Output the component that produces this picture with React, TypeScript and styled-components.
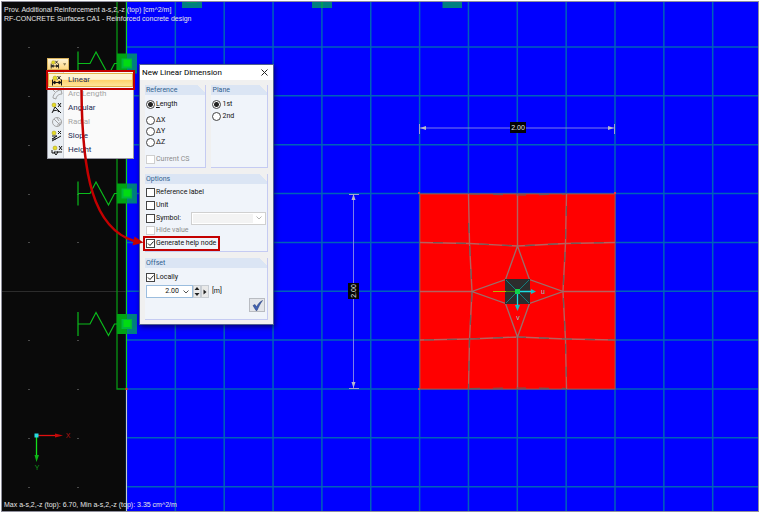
import React, { useState } from "react";
import styled, { createGlobalStyle, css } from "styled-components";

const GlobalStyle = createGlobalStyle`
  * { box-sizing: border-box; }
  body { margin: 0; background: #fff; }
`;

const Viewport = styled.main`
  position: relative;
  display: flex;
  flex-direction: column;
  justify-content: space-between;
  min-height: 100vh;
  padding: 5px 4px;
  overflow: hidden;
  background: #0a0a0a;
  color: #e6e6e6;
  font: 7px/9px "Liberation Sans", sans-serif;

  &::after {
    content: "";
    position: absolute;
    inset: 0;
    border: 1px solid #fff;
    border-bottom-width: 2px;
    box-shadow: inset 0 0 0 1px #8f8f9c;
    pointer-events: none;
  }
`;

const Scene = styled.svg`
  position: absolute;
  inset: 0;
  width: 100%;
  height: 100%;
  font-family: "Liberation Sans", sans-serif;
  pointer-events: none;
`;

const Caption = styled.p`
  position: relative;
  margin: 0;
`;

const DimensionMenu = styled.nav`
  position: absolute;
  left: 47px;
  top: 58px;
  width: 87px;
  font: 8px/14px Roboto, sans-serif;
`;

const SplitButton = styled.button`
  display: flex;
  align-items: center;
  gap: 3px;
  width: 22px;
  height: 12px;
  padding: 0 2px;
  border: 1px solid #d9b25c;
  background: linear-gradient(#fff3d4, #ffd983);
`;

const MenuList = styled.ul`
  margin: 0;
  padding: 2px 0 1px;
  list-style: none;
  border: 1px solid #9a9aa4;
  background: linear-gradient(90deg, #e9eef3 0 15px, #d0d5dc 15px 16px, #fafafa 16px);
`;

const MenuItem = styled.button<{ $active?: boolean }>`
  display: flex;
  align-items: center;
  gap: 5px;
  width: 100%;
  height: 14px;
  padding: 0 2px;
  border: 1px solid transparent;
  background: none;
  color: #1e2c55;
  font: inherit;
  text-align: left;
  &:disabled { color: #a5a5a5; }
  ${(p) => p.$active && css`
    border-color: #e2b44c;
    background: linear-gradient(#fff4d3 0 45%, #ffd369 50%, #ffe49a);
  `}
`;

const Dialog = styled.section`
  position: absolute;
  left: 139px;
  top: 64px;
  width: 135px;
  border: 1px solid #51618f;
  background: #f0f0f0;
  box-shadow: 1px 2px 5px rgba(0, 0, 30, 0.6);
  color: #111;
  font: 7px/11px Roboto, sans-serif;
`;

const TitleBar = styled.header`
  display: flex;
  align-items: center;
  justify-content: space-between;
  height: 15px;
  padding: 0 5px 0 2px;
  background: #fff;
`;

const Title = styled.h1`
  margin: 0;
  color: #000;
  font: 8px/14px Roboto, sans-serif;
`;

const CloseButton = styled.button`
  display: flex;
  padding: 0;
  border: 0;
  background: none;
`;

const DialogBody = styled.div`
  display: flex;
  flex-direction: column;
  gap: 6px;
  padding: 5px 5px 4px;
`;

const Columns = styled.div`
  display: grid;
  grid-template-columns: 62fr 57fr;
  gap: 5px;
`;

const Group = styled.fieldset`
  min-width: 0;
  margin: 0;
  padding: 0;
  border: solid #c5cbf2;
  border-width: 0 1px 1px 0;
  background: #f0f4fa;
`;

const GroupTitle = styled.legend`
  float: left;
  width: 100%;
  height: 10px;
  padding: 0 1px;
  background: linear-gradient(225deg, #f0f0f0 5px, #dbe5f4 5px);
  color: #2f5f8f;
  line-height: 10px;
`;

const GroupBody = styled.div<{ $compact?: boolean }>`
  clear: both;
  padding: ${(p) => (p.$compact ? 2 : 4)}px 1px 1px;
`;

const Choice = styled.label<{ $disabled?: boolean; $spaced?: boolean; $tall?: boolean }>`
  display: flex;
  align-items: center;
  gap: 1px;
  height: ${(p) => (p.$tall ? 13 : 11)}px;
  margin-top: ${(p) => (p.$spaced ? 5 : 0)}px;
  color: ${(p) => (p.$disabled ? "#8d8d8d" : "#111")};
  white-space: nowrap;
`;

const Radio = styled.input.attrs({ type: "radio" })`
  appearance: none;
  flex: none;
  width: 9px;
  height: 9px;
  margin: 0;
  border: 1px solid #444;
  border-radius: 50%;
  background: #fff;
  &:checked { background: radial-gradient(circle, #222 0 2px, #fff 3px); }
`;

const CheckBoxFrame = styled.span`
  position: relative;
  display: flex;
  flex: none;
`;

const CheckInput = styled.input.attrs({ type: "checkbox" })`
  appearance: none;
  width: 9px;
  height: 9px;
  margin: 0;
  border: 1px solid #444;
  background: #fff;
  &:disabled { border-color: #cfcfcf; }
`;

const CheckMark = styled.svg`
  position: absolute;
  inset: 0;
  pointer-events: none;
`;

const SymbolRow = styled.div`
  display: flex;
  align-items: center;
  justify-content: space-between;
  height: 12px;
`;

const SelectShell = styled.div<{ $wide?: boolean }>`
  display: flex;
  align-items: center;
  width: ${(p) => (p.$wide ? 75 : 47)}px;
  height: 13px;
  padding-right: 3px;
  border: 1px solid ${(p) => (p.$wide ? "#d0d0d0" : "#9bbdde")};
  background: #fff;
`;

const SymbolSelect = styled.select`
  appearance: none;
  flex: 1;
  min-width: 0;
  height: 9px;
  margin: 0 3px 0 1px;
  border: 0;
  background: #eee;
`;

const ValueInput = styled.input`
  flex: 1;
  min-width: 0;
  height: 11px;
  padding: 0 4px 0 0;
  border: 0;
  background: #fff;
  color: #111;
  font: inherit;
  text-align: right;
`;

const OffsetRow = styled.div`
  display: flex;
  align-items: center;
  margin-top: 2px;
`;

const StepButton = styled.button`
  display: flex;
  align-items: center;
  justify-content: center;
  width: 8px;
  height: 13px;
  padding: 0;
  border: 1px solid #c8cdd3;
  background: #e9e9e9;
`;

const UnitText = styled.span`
  margin-left: 3px;
`;

const Actions = styled.div`
  display: flex;
  justify-content: flex-end;
  padding: 0 1px 6px 0;
`;

const ApplyButton = styled.button`
  display: flex;
  align-items: center;
  justify-content: center;
  width: 16px;
  height: 14px;
  padding: 0;
  border: 1px solid #b9bcc2;
  background: #e4e6ea;
`;

const STEP = 48.85;
const LEFT = 126.5;
const TOP = 47;
const columns = Array.from({ length: 40 }, (_, i) => LEFT + i * STEP);
const rows = Array.from({ length: 30 }, (_, i) => TOP + i * STEP);

function Spring({ y }: { y: number }) {
  return (
    <g>
      <path
        d={`M78 ${y - 12}v24M78 ${y}h12l6-11.500 12.500 23 6-11.500h3`}
        fill="none" stroke="#0abb1b" strokeWidth="1.200"
      />
      <rect x="117" y={y - 10} width="10" height="20" fill="#00a313" />
      <rect x="127" y={y - 10} width="10" height="20" fill="#008080" />
      <rect x="121.500" y={y - 5} width="10.500" height="10" fill="#00b83a" />
      <rect x="123.500" y={y - 4} width="7" height="7" fill="#00dc12" />
    </g>
  );
}

function ModelScene() {
  return (
    <Scene aria-hidden="true">
      <rect x={LEFT} y="0" width="100%" height="100%" fill="#0000ff" />
      <g stroke="#0062b8" strokeWidth="1.500">
        {columns.map((x) => <line key={x} x1={x} x2={x} y1="0" y2="100%" />)}
        {rows.map((y) => <line key={y} x1={LEFT} x2="100%" y1={y} y2={y} />)}
      </g>
      <g fill="#4a4a4a">
        {rows.map((y) => (
          <g key={y}>
            <rect x="28" y={Math.round(y)} width="2" height="1" />
            <rect x="77" y={Math.round(y)} width="2" height="1" />
          </g>
        ))}
      </g>
      <path d="M1 291.500H126" stroke="#2c2c2c" />
      <g fill="#008080">
        <rect x="182" y="0" width="20" height="8" />
        <rect x="312" y="0" width="20" height="8" />
        <rect x="442.500" y="0" width="19.500" height="8" />
      </g>
      <path d="M187 0h10v3h-10zM321 2h2v6h-2z" fill="#009b5a" />
      <path d="M117 0V389H126.500" fill="none" stroke="#099514" strokeWidth="1.300" />
      <path d="M126.500 0V388" stroke="#12cf1c" />
      <path d="M126.500 389V514" stroke="#c9c9c9" />
      <rect x="125.500" y="388" width="2" height="2" fill="#f22" />
      {[63.5, 193.5, 324].map((y) => <Spring key={y} y={y} />)}

      <rect x="420" y="194" width="195" height="195" fill="#ff0000" stroke="#b54a3c" strokeWidth="1" />
      <g fill="none" stroke="#b5625e" strokeWidth="1.400">
        <path d="M468.500 194L469.500 243L472 291.500L469.500 340L468.500 389" />
        <path d="M566.500 194L565.500 243L563 291.500L565.500 340L566.500 389" />
        <path d="M420 242.500L469.500 243.500L517.500 246L565.500 243.500L615 242.500" />
        <path d="M420 340L469.500 339L517.500 337L565.500 339L615 340" />
        <path d="M517.500 194V246M517.500 337V389M420 291.500H472M563 291.500H615" />
      </g>
      <g fill="none" stroke="#6c5a58" strokeWidth="1.200" strokeDasharray="10 13">
        <path d="M468.500 223L469.500 243L472 291.500L469.500 340L468.500 389" />
        <path d="M566.500 206L565.500 243L563 291.500L565.500 340L566.500 389" />
        <path d="M433 242.500L469.500 243.500L517.500 246L565.500 243.500L615 242.500" />
        <path d="M424 340L469.500 339L517.500 337L565.500 339L615 340" />
        <path d="M470 194L517.500 195L566 194M470 388.500L517.500 388L566 388.500" />
      </g>
      <path
        d="M517.500 246L505.500 279.500L472 291.500L505.500 303.500L517.500 337L529.500 303.500L563 291.500L529.500 279.500Z"
        fill="none" stroke="#98706c" strokeWidth="1.300"
      />
      <rect x="505" y="279" width="25" height="25" fill="#2d2d2d" />
      <path d="M506 280L529 303M529 280L506 303" stroke="#137f7f" />
      <path d="M493 291.500H506" stroke="#b4b600" />
      <path d="M506 291.500H516" stroke="#3f8b10" />
      <path d="M518 291.500H533M517.500 292V306" stroke="#18dfe4" strokeWidth="1.300" />
      <path d="M531 289l5 2.500-5 2.500zM515 305h5l-2.500 6z" fill="#18bfc5" />
      <rect x="515" y="289" width="5" height="5" fill="#0fd34d" />
      <g fill="#80cfca" fontSize="7" textAnchor="middle">
        <text x="543" y="294">u</text>
        <text x="518" y="320">v</text>
      </g>

      <g stroke="#7e7ee8">
        <path d="M420 128H615M353.500 195V388" />
        <path d="M419.500 124v10M614.500 124v10M349 194.500h10M349 388.500h10" stroke="#a2a2d2" />
      </g>
      <path d="M420 128l6-2v4zM614 128l-6-2v4zM353.500 194l-2 6h4zM353.500 388l-2-6h4z" fill="#b9b9c8" />
      <g fontSize="7" fill="#e8e8e8" textAnchor="middle">
        <rect x="510" y="122" width="16" height="11" fill="#050505" />
        <text x="518" y="130">2.00</text>
        <rect x="348" y="283" width="11" height="16" fill="#050505" />
        <text transform="translate(356 291) rotate(-90)">2.00</text>
      </g>
      <path d="M418 192h2v2h-2zM614 192h2v2h-2zM418 388h2v2h-2z" fill="#e8304c" />

      <path d="M37 435.500H56" stroke="#e01010" strokeWidth="1.300" />
      <path d="M55 433.500L63 435.500L55 437.500Z" fill="#c40808" />
      <path d="M36.500 436V455" stroke="#14e01c" strokeWidth="1.300" />
      <path d="M34.500 455h4.500L36.500 462Z" fill="#0eb516" />
      <rect x="34.500" y="433.500" width="4" height="4" fill="#27dbe0" />
      <g fontSize="7" textAnchor="middle">
        <text x="68" y="438" fill="#b31212">X</text>
        <text x="37" y="470" fill="#0c9c16">Y</text>
      </g>
    </Scene>
  );
}

type IconKind = "linear" | "arc" | "angular" | "radial" | "slope" | "height";

const iconShapes: Record<IconKind, React.ReactNode> = {
  linear: (
    <>
      <path d="M1.500 5.500v6M10.500 5.500v6M1 8.500h10" />
      <path d="M2 8.500l2-1.500v3zM10 8.500L8 7v3z" />
      <path d="M6.500 2l3 3.500M9.500 2l-3 3.500" />
    </>
  ),
  arc: <><path d="M2 10C2 6 6 2 10 2M5 11c0-3 3-5 6-5M2 10l3 1M10 2l1 4" /><path d="M2 2l2 2" /></>,
  angular: <><path d="M1 11L4 5M4 5l6 6M2 9c3-1 4-1 6 1M7 1l3 4M10 1L7 5" /></>,
  radial: <><circle cx="6" cy="6" r="4.500" /><path d="M3 3l6 6M6 9h3V6M6 2l2 3" /></>,
  slope: <><path d="M1 6h5l-5 3h4M1 11l9-5M7 1l3 3M10 1L7 4" /></>,
  height: <><path d="M1 6v3h3M3 8l2 3 2-3zM6 8h5M8 2l3 4M11 2L8 6" /></>,
};

function DimensionIcon({ kind, disabled }: { kind: IconKind; disabled?: boolean }) {
  const node: Partial<Record<IconKind, [number, number]>> = {
    linear: [4, 4], angular: [3, 3], slope: [3, 3], height: [4, 4],
  };
  const at = node[kind];
  return (
    <svg width="12" height="12" viewBox="0 0 12 12" fill="none" stroke={disabled ? "#a2a2a2" : "#151515"} aria-hidden="true">
      {iconShapes[kind]}
      {at && <circle cx={at[0]} cy={at[1]} r="2" fill="#e7dc24" stroke="#9c931c" strokeWidth=".5" />}
    </svg>
  );
}

function Check({ checked, disabled }: { checked?: boolean; disabled?: boolean }) {
  const [on, setOn] = useState(!!checked);
  return (
    <CheckBoxFrame>
      <CheckInput checked={on} disabled={disabled} onChange={(e) => setOn(e.target.checked)} />
      {on && (
        <CheckMark width="9" height="9" viewBox="0 0 9 9" fill="none" stroke="#222">
          <path d="M2 4.500L4 6.500L7.500 2.500" />
        </CheckMark>
      )}
    </CheckBoxFrame>
  );
}

const Chevron = ({ muted }: { muted?: boolean }) => (
  <svg width="6" height="4" viewBox="0 0 6 4" fill="none" stroke={muted ? "#b5b5b5" : "#555"} aria-hidden="true">
    <path d="M.5 .5L3 3L5.500 .5" />
  </svg>
);

const menuItems: { label: string; kind: IconKind; active?: boolean; disabled?: boolean }[] = [
  { label: "Linear", kind: "linear", active: true },
  { label: "Arc Length", kind: "arc", disabled: true },
  { label: "Angular", kind: "angular" },
  { label: "Radial", kind: "radial", disabled: true },
  { label: "Slope", kind: "slope" },
  { label: "Height", kind: "height" },
];

export default function App() {
  return (
    <>
      <GlobalStyle />
      <Viewport>
        <ModelScene />
        <div>
          <Caption>Prov. Additional Reinforcement a-s,2,-z (top) [cm^2/m]</Caption>
          <Caption>RF-CONCRETE Surfaces CA1 - Reinforced concrete design</Caption>
        </div>
        <Caption>Max a-s,2,-z (top): 6.70, Min a-s,2,-z (top): 3.35 cm^2/m</Caption>

        <DimensionMenu aria-label="Dimensions">
          <SplitButton aria-label="Dimension type">
            <DimensionIcon kind="linear" />
            <svg width="4" height="3" viewBox="0 0 4 3" aria-hidden="true"><path d="M0 0h4L2 3z" fill="#8a7a50" /></svg>
          </SplitButton>
          <MenuList>
            {menuItems.map((item) => (
              <li key={item.label}>
                <MenuItem $active={item.active} disabled={item.disabled}>
                  <DimensionIcon kind={item.kind} disabled={item.disabled} />
                  {item.label}
                </MenuItem>
              </li>
            ))}
          </MenuList>
        </DimensionMenu>

        <Dialog role="dialog" aria-labelledby="dialog-title">
          <TitleBar>
            <Title id="dialog-title">New Linear Dimension</Title>
            <CloseButton aria-label="Close">
              <svg width="7" height="7" viewBox="0 0 7 7" stroke="#222"><path d="M.5 .5l6 6M6.500 .5l-6 6" /></svg>
            </CloseButton>
          </TitleBar>
          <DialogBody>
            <Columns>
              <Group>
                <GroupTitle>Reference</GroupTitle>
                <GroupBody>
                  <Choice><Radio name="reference" defaultChecked /><span><u>L</u>ength</span></Choice>
                  <Choice $spaced><Radio name="reference" />ΔX</Choice>
                  <Choice><Radio name="reference" />ΔY</Choice>
                  <Choice><Radio name="reference" />ΔZ</Choice>
                  <Choice $spaced $tall $disabled><Check disabled />Current CS</Choice>
                </GroupBody>
              </Group>
              <Group>
                <GroupTitle>Plane</GroupTitle>
                <GroupBody>
                  <Choice><Radio name="plane" defaultChecked />1st</Choice>
                  <Choice $tall><Radio name="plane" />2nd</Choice>
                </GroupBody>
              </Group>
            </Columns>
            <Group>
              <GroupTitle>Options</GroupTitle>
              <GroupBody $compact>
                <Choice $tall><Check />Reference label</Choice>
                <Choice $tall><Check />Unit</Choice>
                <SymbolRow>
                  <Choice><Check />Symbol:</Choice>
                  <SelectShell $wide>
                    <SymbolSelect disabled aria-label="Symbol" />
                    <Chevron muted />
                  </SelectShell>
                </SymbolRow>
                <Choice $tall $disabled><Check disabled />Hide value</Choice>
                <Choice $tall><Check checked />Generate help node</Choice>
              </GroupBody>
            </Group>
            <Group>
              <GroupTitle>Offset</GroupTitle>
              <GroupBody>
                <Choice><Check checked />Locally</Choice>
                <OffsetRow>
                  <SelectShell>
                    <ValueInput defaultValue="2.00" aria-label="Offset in metres" />
                    <Chevron />
                  </SelectShell>
                  <StepButton aria-label="Step value">
                    <svg width="6" height="9" viewBox="0 0 6 9" fill="#222"><path d="M3 0L5.500 3H.5zM3 9L.5 6h5z" /></svg>
                  </StepButton>
                  <StepButton aria-label="More">
                    <svg width="4" height="6" viewBox="0 0 4 6" fill="#222"><path d="M.5 .5L3.500 3L.5 5.500z" /></svg>
                  </StepButton>
                  <UnitText>[m]</UnitText>
                </OffsetRow>
                <Actions>
                  <ApplyButton aria-label="Apply">
                    <svg width="11" height="11" viewBox="0 0 11 11"><path d="M1 5.500L3 4.500L4.500 7C6 4 7.500 2 10.500 .5C8 4 6.500 7 5 10.500H4Z" fill="#4262b5" stroke="#23386f" strokeWidth=".5" /></svg>
                  </ApplyButton>
                </Actions>
              </GroupBody>
            </Group>
          </DialogBody>
        </Dialog>

        <Scene aria-hidden="true">
          <g fill="none" stroke="#c40000" strokeWidth="2">
            <rect x="47" y="71" width="87" height="18" />
            <rect x="144" y="237" width="75" height="13" />
            <path d="M81.500 90C82 175 93 228 134 241" strokeWidth="2.500" />
          </g>
          <path d="M134.500 236.500L143.500 242.500L132.500 245.500Z" fill="#c40000" />
        </Scene>
      </Viewport>
    </>
  );
}
